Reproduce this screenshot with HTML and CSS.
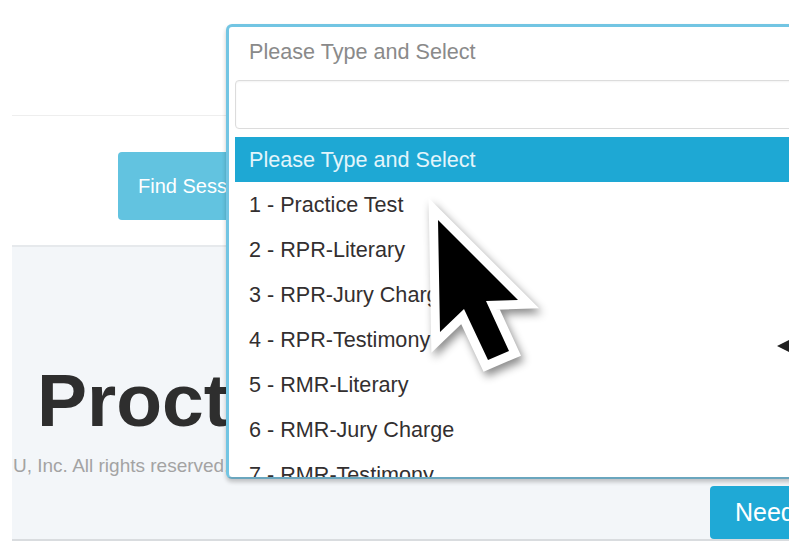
FILE: index.html
```html
<!DOCTYPE html>
<html lang="en">
<head>
<meta charset="utf-8">
<title>Find Session</title>
<link rel="stylesheet" href="styles.css">
</head>
<body>
<div class="frame">
  <header class="topbar"></header>
  <div class="actions">
    <button class="btn-find">Find Session</button>
  </div>
  <section class="panel">
    <h1 class="brand">ProctorU</h1>
    <p class="copy">U, Inc. All rights reserved.</p>
    <div class="panel-foot">
      <button class="btn-need">Need Help?</button>
    </div>
  </section>

  <div class="select2">
    <div class="selection">Please Type and Select</div>
    <div class="search"></div>
    <ul class="results">
      <li class="active">Please Type and Select</li>
      <li>1 - Practice Test</li>
      <li>2 - RPR-Literary</li>
      <li>3 - RPR-Jury Charge</li>
      <li>4 - RPR-Testimony</li>
      <li>5 - RMR-Literary</li>
      <li>6 - RMR-Jury Charge</li>
      <li>7 - RMR-Testimony</li>
    </ul>
  </div>
  <span class="scroll-arrow"></span>

  <svg class="cursor" width="170" height="220" viewBox="0 0 170 220">
    <polygon points="38,40 40,152 64,129 88,180 109,171 86,121 118,120"
      fill="#000" stroke="#fff" stroke-width="18" stroke-linejoin="miter" paint-order="stroke fill"/>
  </svg>
</div>
</body>
</html>
```
FILE: styles.css
```css
html, body {
  margin: 0;
  padding: 0;
  background: #fff;
}

body {
  font-family: "Liberation Sans", Arial, sans-serif;
}

.frame {
  position: relative;
  width: 789px;
  height: 549px;
  overflow: hidden;
  background: #fff;
}

.topbar {
  height: 116px;
  margin-left: 12px;
  box-sizing: border-box;
  border-bottom: 1px solid #eeeeee;
}

.actions {
  display: flex;
  padding: 36px 0 25px 118px;
}

.btn-find {
  width: 220px;
  height: 68px;
  border: 0;
  border-radius: 4px;
  background: #62c3e0;
  color: #fff;
  font: 20px "Liberation Sans", Arial, sans-serif;
  text-align: left;
  padding: 0 0 0 20px;
  white-space: nowrap;
}

.panel {
  margin-left: 12px;
  height: 292px;
  background: #f3f6f9;
  border-top: 2px solid #e6e9ec;
  border-bottom: 2px solid #d9dcdf;
}

.brand {
  margin: 0;
  padding: 116px 0 0 25px;
  font: bold 75px/75px "Liberation Sans", Arial, sans-serif;
  color: #2e2e2e;
  white-space: nowrap;
}

.copy {
  margin: 18px 0 0 1px;
  font: 19px/19px "Liberation Sans", Arial, sans-serif;
  color: #a3a3a3;
  white-space: nowrap;
}

.panel-foot {
  display: flex;
  justify-content: flex-end;
  margin-top: 11px;
}

.btn-need {
  width: 79px;
  height: 53px;
  border: 0;
  border-radius: 4px 0 0 4px;
  background: #1fa9d6;
  color: #fff;
  font: 25px "Liberation Sans", Arial, sans-serif;
  text-align: left;
  padding: 0 0 0 25px;
  white-space: nowrap;
  overflow: hidden;
}

/* dropdown overlay */
.select2 {
  position: absolute;
  left: 226px;
  top: 24px;
  width: 600px;
  height: 455px;
  box-sizing: border-box;
  display: flex;
  flex-direction: column;
  background: #fff;
  border: 3px solid #72c5e3;
  border-bottom: 2px solid #6aa6be;
  border-radius: 6px;
  box-shadow: 0 3px 4px rgba(0, 0, 0, 0.22);
}

.selection {
  flex: none;
  height: 53px;
  line-height: 50px;
  padding-left: 20px;
  font-size: 21.6px;
  color: #8a8a8a;
  white-space: nowrap;
}

.search {
  flex: none;
  height: 49px;
  margin-left: 6px;
  box-sizing: border-box;
  border: 1px solid #dcdcdc;
  border-radius: 4px;
  box-shadow: inset 0 1px 2px rgba(0, 0, 0, 0.05);
}

.results {
  flex: 1;
  list-style: none;
  margin: 8px 0 0 6px;
  padding: 0;
  overflow: hidden;
}

.results li {
  height: 45px;
  line-height: 45px;
  padding-left: 14px;
  font-size: 21.6px;
  color: #332f30;
  white-space: nowrap;
}

.results li.active {
  background: #1ea8d4;
  color: #e3f5fb;
}

.scroll-arrow {
  position: absolute;
  left: 777px;
  top: 340px;
  width: 0;
  height: 0;
  border-top: 6px solid transparent;
  border-bottom: 6px solid transparent;
  border-right: 12px solid #222;
}

.cursor {
  position: absolute;
  left: 400px;
  top: 180px;
  filter: drop-shadow(3px 5px 4px rgba(0, 0, 0, 0.45));
}
```
